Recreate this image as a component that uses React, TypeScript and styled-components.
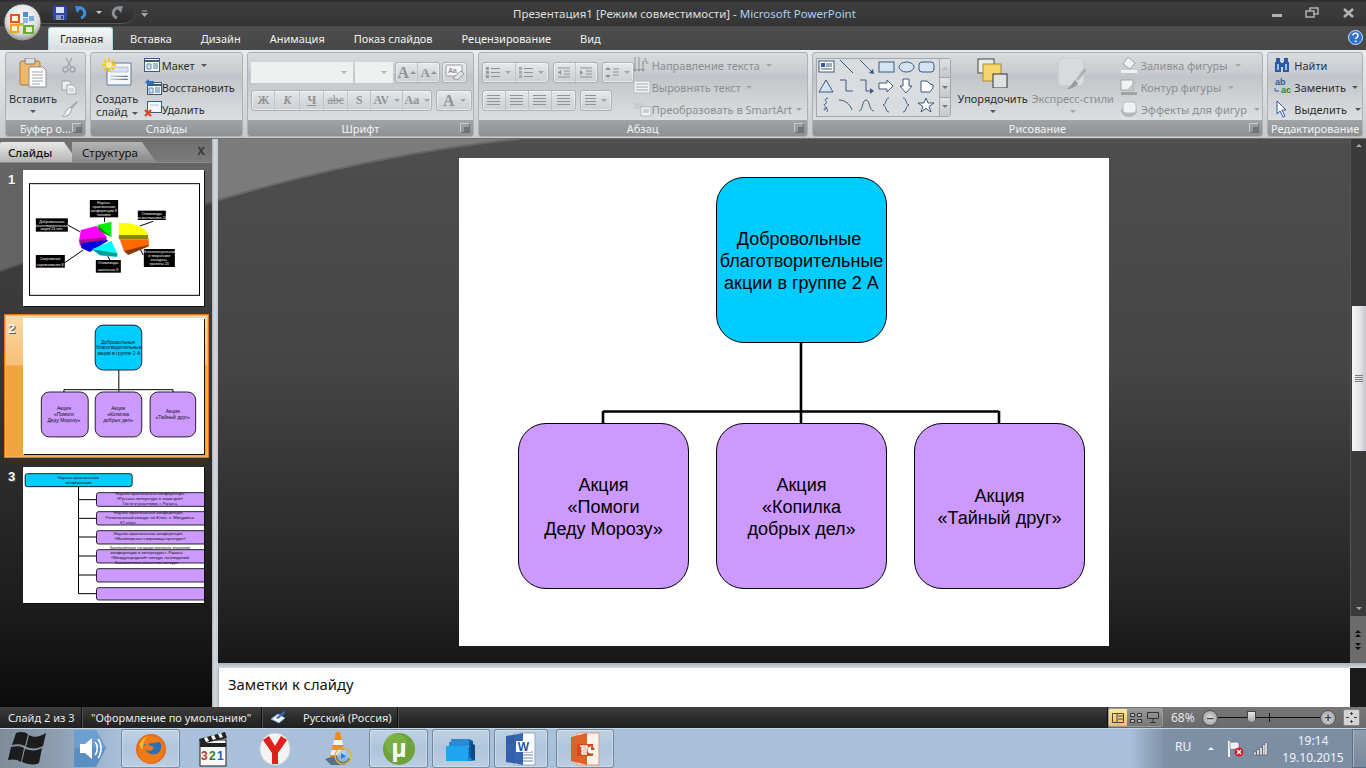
import React from "react";
import styled, { createGlobalStyle } from "styled-components";

const Global = createGlobalStyle`
  html, body { margin: 0; padding: 0; background: #2a2a2a; }
  * { box-sizing: border-box; }
  body { font-family: "Noto Sans", "Liberation Sans", sans-serif; font-size: 11px; overflow: hidden; }
`;

const Window = styled.div`width: 1366px; height: 768px; display: flex; flex-direction: column; overflow: hidden; position: relative;`;

/* ---------- title bar ---------- */
const TitleBar = styled.div`
  height: 26px; flex: none; display: flex; align-items: center; position: relative;
  background: linear-gradient(#2a2b33 0, #3c3c3c 3px, #3a3a3a 60%, #333 100%);
  padding-left: 40px;
`;
const Orb = styled.div`position: absolute; left: 3px; top: 3px; width: 39px; height: 39px; z-index: 5;`;
const Qat = styled.div`
  width: 94px; height: 21px; display: flex; align-items: center; padding-left: 13px; gap: 7px;
  background: linear-gradient(#3e3e3e, #2b2b2b); border-radius: 0 11px 11px 0; border-bottom: 1px solid #555;
`;
const QatCustom = styled.div`margin-left: 7px; display: flex;`;
const TitleText = styled.div`
  position: absolute; left: 513px; top: 5px; white-space: nowrap; color: #dedede; font-size: 11.5px; line-height: 18px;
`;
const TitleApp = styled.span`color: #a9d0f2;`;
const WinControls = styled.div`margin-left: auto; display: flex; align-items: center; height: 26px; gap: 21px; padding-right: 9px;`;

/* ---------- tab row ---------- */
const TabRow = styled.div`
  height: 24px; flex: none; display: flex; align-items: flex-end; padding-left: 48px; position: relative;
  background: linear-gradient(#4d4d4d, #474747);
  border-top: 1px solid #4a4a4a;
`;
const Tab = styled.div<{ $active?: boolean }>`
  height: 23px; line-height: 24px; white-space: nowrap; font-size: 11px;
  ${p => p.$active
    ? `padding: 0 11px; width: 65px; color: #1e1e1e; background: linear-gradient(#f4f7f8, #dfe4e6 70%, #d8dcdf); border-radius: 3px 3px 0 0; border: 1px solid #a9d6dc; border-bottom: none; margin-right: 17px; line-height: 22px;`
    : `color: #f1f1f1; margin-right: 29px;`}
`;
const HelpBtn = styled.div`position: absolute; right: 3px; top: 3px; display: flex;`;

/* ---------- ribbon ---------- */
const Ribbon = styled.div`
  height: 89px; flex: none; display: flex; gap: 3px; padding: 2px 2px 1px 5px;
  background: linear-gradient(#e9eaeb, #d9dbdd 50%, #c8cbce);
  border-bottom: 1px solid #6e6e6e;
`;
const Group = styled.div<{ $w: number }>`
  width: ${p => p.$w}px; display: flex; flex-direction: column; border: 1px solid #aeb1b4; border-radius: 3px; overflow: hidden;
  background: linear-gradient(#d9dcdf 0, #c9ccd0 22%, #c1c5c9 28%, #dde1e2 85%, #e2e5e5 100%);
  margin-right: 1px;
`;
const GroupBody = styled.div`flex: 1; display: flex; min-height: 0; position: relative;`;
const GroupLabel = styled.div`
  height: 16px; flex: none; position: relative; text-align: center; line-height: 17px; font-size: 11px; color: #f2f2f2; white-space: nowrap;
  background: linear-gradient(#a0a4a7, #8d9194);
`;
const Launcher = styled.div`position: absolute; right: 3px; top: 3px; width: 10px; height: 10px; border: 1px solid #c9cccf; border-right-color: #6e7174; border-bottom-color: #6e7174; &::after { content: ""; position: absolute; right: 0; bottom: 0; width: 5px; height: 5px; background: #70757a; }`;
const BigBtn = styled.div<{ $w: number; $ml?: number; $dim?: boolean }>`
  width: ${p => p.$w}px; margin-left: ${p => p.$ml ?? 0}px; display: flex; flex-direction: column; align-items: center;
  padding-top: 5px; line-height: 13px; font-size: 11px; color: ${p => p.$dim ? "#8c8f91" : "#2f2f2f"}; text-align: center; white-space: nowrap;
`;
const BigIcon = styled.div`height: 34px; display: flex; align-items: flex-start; justify-content: center;`;
const Arrow = styled.span<{ $dim?: boolean }>`
  display: inline-block; width: 0; height: 0; border: 3px solid transparent; border-top: 3px solid ${p => p.$dim ? "#a3a6a8" : "#555"}; border-bottom: none; vertical-align: middle; margin-left: 4px;
`;
const BigArrow = styled(Arrow)`display: block; margin: 5px 0 0;`;
const SmallCol = styled.div<{ $ml?: number; $w?: number }>`
  display: flex; flex-direction: column; margin-left: ${p => p.$ml ?? 0}px; padding-top: 1px; ${p => p.$w ? `width:${p.$w}px;` : ""}
`;
const SmallRow = styled.div<{ $dim?: boolean; $gap?: number }>`
  height: 22px; display: flex; align-items: center; gap: ${p => p.$gap ?? 3}px; white-space: nowrap; font-size: 11px;
  color: ${p => p.$dim ? "#8c8f91" : "#2f2f2f"};
`;
const Controls = styled.div<{ $pl: number }>`display: flex; flex-direction: column; padding: 9px 0 0 ${p => p.$pl}px; gap: 7px;`;
const CtlRow = styled.div<{ $gap?: number }>`display: flex; gap: ${p => p.$gap ?? 4}px; height: 21px;`;
const Combo = styled.div<{ $w: number }>`
  width: ${p => p.$w}px; height: 21px; background: #eef0f0; display: flex; align-items: center; justify-content: flex-end; padding-right: 6px;
`;
const BtnGroup = styled.div`
  display: flex; height: 21px; border: 1px solid #aeb2b5; border-radius: 3px; background: linear-gradient(#e6e8ea, #d7dadc 50%, #cdd0d3);
  box-shadow: inset 0 0 0 1px rgba(255,255,255,.45);
`;
const Btn = styled.div<{ $w: number; $size?: number; $i?: boolean; $u?: boolean; $s?: boolean }>`
  width: ${p => p.$w}px; display: flex; align-items: center; justify-content: center; gap: 1px; color: #8f9396; white-space: nowrap;
  border-right: 1px solid #c1c4c7; font: ${p => p.$i ? "italic " : ""}bold ${p => p.$size ?? 12}px "Liberation Serif", serif;
  ${p => p.$u ? "text-decoration: underline;" : ""} ${p => p.$s ? "text-decoration: line-through; font-weight: 400;" : ""}
  &:last-child { border-right: none; }
`;
const Gallery = styled.div`
  margin: 5px 0 0 3px; width: 123px; height: 59px; display: grid; grid-template-columns: repeat(6, 20px); grid-template-rows: repeat(3, 19px);
  justify-content: center; align-content: center; background: #d9dde0; border: 1px solid #a5a8ab; border-right: none;
`;
const GalleryScroll = styled.div`
  margin-top: 5px; width: 12px; height: 59px; display: flex; flex-direction: column; border: 1px solid #a5a8ab; border-radius: 0 3px 3px 0; overflow: hidden;
`;
const GalleryBtn = styled.div`
  flex: 1; display: flex; align-items: center; justify-content: center; border-bottom: 1px solid #a5a8ab;
  background: linear-gradient(#dfe1e3, #c6c9cc); &:last-child { border-bottom: 0; }
`;
const Tri = styled.span<{ $up?: boolean; $c?: string }>`
  display: block; flex: none; width: 0; height: 0; border: 3px solid transparent;
  ${p => p.$up ? `border-bottom: 3px solid ${p.$c ?? "#aaa"}; border-top: none;` : `border-top: 3px solid ${p.$c ?? "#777"}; border-bottom: none;`}
`;

/* ---------- workspace ---------- */
const Workspace = styled.div`flex: 1; min-height: 0; display: flex; position: relative; background: linear-gradient(#4e4e4e 0, #454545 40%, #252525 80%, #0f0f0f 100%);`;
const Swoosh = styled.svg`position: absolute; left: 0; top: 0; pointer-events: none;`;
const SidePanel = styled.div`width: 212px; flex: none; display: flex; flex-direction: column; position: relative; background: rgba(0,0,0,.18);`;
const PanelTabs = styled.div`height: 24px; flex: none; display: flex; padding-top: 3px; position: relative; background: linear-gradient(#6e6e6e, #7b7b7b); border-bottom: 1px solid #8a8a8a;`;
const PanelTab = styled.div<{ $active?: boolean }>`
  height: 20px; line-height: 21px; font-size: 11.5px; white-space: nowrap;
  clip-path: polygon(0 0, calc(100% - 14px) 0, 100% 100%, 0 100%);
  ${p => p.$active
    ? `width: 78px; padding-left: 8px; color: #111; font-weight: 500; background: linear-gradient(#e8e8e8, #b5b5b5); border-radius: 2px 0 0 0;`
    : `width: 84px; margin-left: -6px; padding-left: 10px; color: #111; background: linear-gradient(#b4b4b4, #8a8a8a);`}
`;
const PanelClose = styled.div`position: absolute; right: 7px; top: 3px; color: #3a3a3a; font: bold 14px "Liberation Sans", sans-serif;`;
const ThumbList = styled.div`display: flex; flex-direction: column; gap: 5px; padding-top: 2px;`;
const ThumbRow = styled.div<{ $sel?: boolean }>`
  margin-left: 4px; width: 205px; height: 144px; display: flex; padding: 4px 0 0 18px; position: relative;
  border: 1px solid transparent; &:nth-child(3) { margin-top: -1px; }
  ${p => p.$sel ? `border-color: #e0761c; box-shadow: inset 0 0 0 1px #f6b35c; padding-top: 3px; background: linear-gradient(#fbd9a5 0, #f7c078 35%, #f0a53f 36%, #f0a53f 100%);` : ""}
`;
const ThumbNum = styled.div`
  position: absolute; left: 3px; top: 6px; color: #f8f8f8; font: bold 13px "Liberation Sans", sans-serif; text-shadow: 1px 1px 0 #555;
`;
const ThumbBox = styled.div`width: 181px; height: 136px; background: #fff; box-shadow: 1px 1px 0 #111; flex: none;`;
const Splitter = styled.div`width: 6px; flex: none; background: linear-gradient(90deg, #aeb2b8, #d3d7de 40%, #c4c8cf); position: relative;`;
const RightCol = styled.div`flex: 1; min-width: 0; display: flex; flex-direction: column; position: relative;`;
const EditRow = styled.div`flex: 1; min-height: 0; display: flex;`;
const SlideArea = styled.div`flex: 1; min-width: 0; display: flex; justify-content: center; padding-top: 19px;`;
const Slide = styled.div`width: 650px; height: 488px; background: #fff; position: relative; font-family: "Liberation Sans", sans-serif; flex: none;`;
const Connectors = styled.svg`position: absolute; left: 0; top: 0;`;
const Node = styled.div<{ $x: number; $y: number; $c: string }>`
  position: absolute; left: ${p => p.$x}px; top: ${p => p.$y}px; width: 171px; height: 166px; border-radius: 28px; border: 1.5px solid #000;
  background: ${p => p.$c}; display: flex; align-items: center; justify-content: center; text-align: center; padding-top: 1px;
  font-size: 18px; line-height: 22px; color: #000; white-space: pre;
`;
const ScrollBar = styled.div`width: 16px; flex: none; display: flex; flex-direction: column; align-items: center; background: #3a3a3a; border-left: 1px solid #555; padding-top: 5px;`;
const ScrollTrack = styled.div`flex: 1; width: 100%; display: flex; flex-direction: column; align-items: center; justify-content: flex-start;`;
const ScrollThumb = styled.div`
  width: 14px; height: 145px; margin-top: 159px; display: flex; flex-direction: column; gap: 1px; align-items: center; justify-content: center;
  background: linear-gradient(90deg, #f6f6f6, #e9e9ec 50%, #c5c6cc);
  & > i { display: block; width: 8px; height: 1px; background: #7c7c80; }
`;
const ScrollEnd = styled.div`margin-top: auto; margin-bottom: 6px;`;
const PageBtns = styled.div`
  height: 47px; width: 16px; margin-left: -1px; flex: none; background: #6b6b6b; display: flex; flex-direction: column; align-items: center; justify-content: center; gap: 6px;
`;
const DoubleArrow = styled.div`display: flex; flex-direction: column; gap: 1px;`;
const HGrip = styled.div`height: 5px; flex: none; background: linear-gradient(#aeb2b8, #d3d7de);`;
const NotesRow = styled.div`height: 39px; flex: none; display: flex;`;
const Notes = styled.div`flex: 1; background: #fff; padding: 6px 0 0 9px; color: #111; font-size: 14.8px; line-height: 20px; border-left: 1px solid #aeb2b8;`;
const NotesEnd = styled.div`width: 16px; flex: none; background: #1b1b1b;`;

/* ---------- status bar ---------- */
const StatusBar = styled.div`
  height: 21px; flex: none; display: flex; align-items: center; color: #e9e9e9; font-size: 11px;
  background: linear-gradient(#3f3f3f, #2c2c2c 50%, #202020); position: relative;
`;
const StatusCell = styled.div<{ $w: number; $pl: number }>`
  width: ${p => p.$w}px; padding-left: ${p => p.$pl}px; height: 21px; line-height: 21px; white-space: nowrap; border-right: 1px solid #111; box-shadow: 1px 0 0 #4c4c4c; display: flex; align-items: center;
`;
const LangText = styled.span`margin-left: 16px;`;
const StatusRight = styled.div`margin-left: auto; display: flex; align-items: center; height: 21px; background: linear-gradient(#777, #6a6a6a); padding: 0 5px 0 0; border-left: 1px solid #111; width: 259px;`;
const ViewBtns = styled.div`display: flex; height: 19px; width: 55px; border: 1px solid #999; border-radius: 2px; overflow: hidden;`;
const ViewBtn = styled.div<{ $on?: boolean }>`flex: 1; display: flex; align-items: center; justify-content: center; background: ${p => p.$on ? "linear-gradient(#ffe7a6,#f8bb55)" : "linear-gradient(#9a9a9a,#777)"};`;
const Zoom = styled.div`width: 31px; margin-left: 8px; color: #e4e6e8; font-size: 12px;`;
const Round = styled.div`width: 16px; height: 16px; border-radius: 50%; background: radial-gradient(#e2e2e2, #8e8e8e); border: 1px solid #555; display: flex; align-items: center; justify-content: center; flex: none; color: #444; font: bold 13px/1 "Liberation Sans", sans-serif;`;
const SliderLine = styled.div`width: 102px; height: 1px; background: #111; position: relative; flex: none;
  &::after { content: ""; position: absolute; left: 51px; top: -4px; width: 1px; height: 9px; background: #111; }`;
const SliderKnob = styled.div`position: absolute; left: 29px; top: -6px; width: 9px; height: 12px; background: linear-gradient(#e8e8e8,#a6a6a6); border: 1px solid #444; clip-path: polygon(0 0,100% 0,100% 65%,50% 100%,0 65%);`;
const FitBtn = styled.div`width: 17px; height: 17px; margin-left: 7px; background: #d4d4d4; border: 1px solid #888; border-radius: 2px; display: flex; align-items: center; justify-content: center; flex: none;`;

/* ---------- taskbar ---------- */
const Taskbar = styled.div`
  height: 40px; flex: none; display: flex; align-items: stretch; position: relative; border-top: 1px solid #c8d7e6;
  background: linear-gradient(90deg, #7d8b99 0, #8e9fb2 60px, #a8c0da 120px, #a8c0da 1130px, #7d90a6 1165px, #7b8da2 100%);
`;
const TaskSlot = styled.div<{ $w: number; $ml: number; $on?: boolean }>`
  width: ${p => p.$w}px; margin-left: ${p => p.$ml}px; flex: none; display: flex; align-items: center; justify-content: center;
  ${p => p.$on ? `border: 1px solid rgba(60,80,100,.55); border-radius: 3px; background: linear-gradient(rgba(255,255,255,.28), rgba(255,255,255,.08) 50%, rgba(255,255,255,.22)); box-shadow: inset 0 0 0 1px rgba(255,255,255,.3);` : ""}
`;
const Tray = styled.div`margin-left: auto; display: flex; align-items: center; color: #f1f4f7; position: relative; height: 100%; font-size: 12px;`;
const Lang = styled.div`width: 33px; margin-top: -4px;`;
const TrayGap = styled.div<{ $w: number }>`width: ${p => p.$w}px; flex: none;`;
const Clock = styled.div`width: 54px; margin-left: 18px; text-align: center; line-height: 17px; font-size: 12px; white-space: nowrap; display: flex; flex-direction: column; align-items: center;`;
const ShowDesk = styled.div`width: 14px; height: 100%; margin-left: 12px; background: linear-gradient(#8d9cad, #76889c); border: 1px solid #5d6d7e; border-right: none; box-shadow: inset 1px 0 0 #a9b7c6;`;

/* ---------- icons ---------- */
const S = ({ w, h = w, children }: { w: number; h?: number; children: React.ReactNode }) => (
  <svg width={w} height={h} viewBox={`0 0 ${w} ${h}`} style={{ display: "block", flex: "none" }}>{children}</svg>
);
const OrbIcon = () => (
  <svg width="39" height="39" viewBox="0 0 39 39">
    <defs>
      <radialGradient id="orb" cx=".5" cy=".35" r=".7"><stop offset="0" stopColor="#fff" /><stop offset=".65" stopColor="#d8dadb" /><stop offset="1" stopColor="#777" /></radialGradient>
    </defs>
    <circle cx="19.5" cy="19.5" r="18.5" fill="url(#orb)" stroke="#4a4a4a" />
    <path d="M7 11h10v9H7z" fill="#e8541e" /><path d="M9 13h6v5H9z" fill="#fff3e0" />
    <path d="M7 21h9v9H7z" fill="#f3a514" /><path d="M9 23h5v5H9z" fill="#fff3d0" />
    <path d="M20 9h5v5h-5z" fill="#4f8fd8" /><path d="M26 13h5v5h-5z" fill="#4f8fd8" opacity=".7" />
    <path d="M20 15h5v5h-5z" fill="#8bb7e6" />
    <path d="M20 22h11v9H20z" fill="#6aad2e" /><path d="M23 24h6v5h-6z" fill="#e6f5d0" />
    <path d="M16 20h5v3h-5z" fill="#b7c64a" />
  </svg>
);
const SaveIcon = () => (<S w={14}><rect width="14" height="14" rx="1" fill="#2c47a8" /><rect x="3" y="1" width="8" height="6" fill="#d8e4f5" /><rect x="3" y="9" width="8" height="5" fill="#8d9bb5" /><rect x="8" y="10" width="2" height="3" fill="#2c47a8" /></S>);
const UndoIcon = ({ c }: { c: string }) => (<S w={15}><path d="M4 3 A5 5 0 1 1 7 13" fill="none" stroke={c} strokeWidth="3" /><path d="M1 1 L8 2 L3 8Z" fill={c} /></S>);
const RedoIcon = () => (<S w={15}><path d="M11 3 A5 5 0 1 0 8 13" fill="none" stroke="#8b8f94" strokeWidth="3" /><path d="M14 1 L7 2 L12 8Z" fill="#8b8f94" /></S>);
const PasteIcon = () => (<S w={28} h={30}><rect x="1" y="3" width="20" height="24" rx="2" fill="#eeb868" stroke="#a87c3c" /><rect x="6" y="0" width="10" height="6" rx="1" fill="#dde0e3" stroke="#7b7f83" /><path d="M10 9h14l3 3v17H10z" fill="#fff" stroke="#8b8f94" /><path d="M13 14h11M13 17h11M13 20h11M13 23h11M13 26h8" stroke="#9ea2a6" /></S>);
const CutIcon = () => (<S w={16}><path d="M5 1l5 9M11 1L6 10" stroke="#a3a7ab" strokeWidth="1.5" /><circle cx="4.5" cy="12.5" r="2.5" fill="none" stroke="#a3a7ab" strokeWidth="1.5" /><circle cx="11.5" cy="12.5" r="2.5" fill="none" stroke="#a3a7ab" strokeWidth="1.5" /></S>);
const CopyIcon = () => (<S w={16}><path d="M1 2h7l2 2v7H1z" fill="#ececec" stroke="#a3a7ab" /><path d="M6 6h6l3 3v6H6z" fill="#f4f4f4" stroke="#a3a7ab" /><path d="M8 10h5M8 12h5" stroke="#b6b9bc" /></S>);
const BrushIcon = () => (<S w={18}><path d="M16 1l1 1-6 7-2-2z" fill="#a6a9ac" /><path d="M9 7l2 2-3 6c-2 1-5 2-7 1 2-1 3-3 4-5z" fill="#ededed" stroke="#a3a7ab" /></S>);
const NewSlideIcon = () => (<S w={30} h={28}><path d="M5 5h24v22H5z" fill="#f5f7f9" stroke="#5d7a9c" /><path d="M8 9h18v5H8z" fill="#d8e2ee" stroke="#b5c4d6" /><path d="M8 18h18v1M8 21h18v1" stroke="#b5c4d6" /><g stroke="#f6c822" strokeWidth="2"><path d="M7 0v14M0 7h14M2 2l10 10M12 2L2 12" /></g><circle cx="7" cy="7" r="3" fill="#fff3a8" /></S>);
const LayoutIcon = () => (<S w={16}><rect x=".5" y="1.5" width="15" height="13" fill="#f3f6f9" stroke="#3d5a80" /><path d="M1 4h14" stroke="#3d5a80" strokeWidth="2" /><path d="M3 7h4v5H3z" fill="#cfe0f2" stroke="#6d8db0" /><path d="M9 7h5M9 9h5M9 11h5" stroke="#5a7da3" /></S>);
const ResetIcon = () => (<S w={18}><rect x="3.5" y="4.5" width="14" height="12" fill="#f3f6f9" stroke="#3d5a80" /><path d="M4 7h13" stroke="#3d5a80" strokeWidth="2" /><path d="M5 10h4v5H5z" fill="#cfe0f2" stroke="#6d8db0" /><path d="M11 10h5M11 12h5M11 14h5" stroke="#5a7da3" /><path d="M1 4l4-3v2h5v3H5v2z" fill="#2f6fc4" /></S>);
const DeleteIcon = () => (<S w={18}><rect x="3.5" y="1.5" width="14" height="11" fill="#f3f6f9" stroke="#3d5a80" /><path d="M6 4h9v2H6z" fill="#cfe0f2" /><path d="M1 10l6 6M7 10l-6 6" stroke="#e0431c" strokeWidth="2.4" /></S>);
const ClearIcon = () => (<S w={20} h={18}><rect x="1" y="1" width="16" height="11" rx="1" fill="#f5f5f5" stroke="#9a9da0" /><text x="3" y="9" fontSize="7" fill="#8f9396" fontFamily="Liberation Sans">Aa</text><path d="M8 14l8-7 3 3-7 6z" fill="#e3e3e3" stroke="#9a9da0" /></S>);
const GrayLines = ({ w = 13, n = 4 }: { w?: number; n?: number }) => (<S w={w} h={n * 3}>{Array.from({ length: n }).map((_, i) => <rect key={i} y={i * 3} width={w} height="1" fill="#8f9396" />)}</S>);
const ListIcon = ({ num }: { num?: boolean }) => (<S w={14} h={12}>{[0, 4, 8].map(y => <g key={y}><rect y={y} width="3" height="3" fill={num ? "#a7aaad" : "#999c9f"} /><rect x="5" y={y + 1} width="9" height="1" fill="#8f9396" /></g>)}</S>);
const IndentIcon = ({ flip }: { flip?: boolean }) => (<S w={14} h={12}><path d="M1 1h12M7 4h6M7 7h6M1 10h12" stroke="#8f9396" /><path d={flip ? "M1 3v5l3-2.5z" : "M4 3v5L1 5.5z"} fill="#8f9396" /></S>);
const SpacingIcon = () => (<S w={14} h={13}><path d="M3 1l3 3H0zM3 12l3-3H0z" fill="#8f9396" /><path d="M8 3h6M8 6h6M8 9h6" stroke="#8f9396" /></S>);
const DirIcon = () => (<S w={17} h={18}><path d="M2 1v13M6 1v13M10 5v9" stroke="#8f9396" /><path d="M0 13l2 3 2-3zM4 13l2 3 2-3zM8 13l2 3 2-3z" fill="#8f9396" /><text x="9" y="8" fontSize="9" fill="#8f9396" fontFamily="Liberation Serif">A</text></S>);
const AlignTextIcon = () => (<S w={18} h={16}><rect x="1" y="2" width="16" height="12" fill="#f1f2f3" stroke="#b6b9bc" /><path d="M3 5h12M3 8h12M3 11h12" stroke="#a3a7ab" /></S>);
const SmartIcon = () => (<S w={19} h={16}><path d="M1 2h10l-2 6H1z" fill="#c9cccf" /><rect x="8" y="6" width="10" height="9" fill="#f1f2f3" stroke="#b6b9bc" /><path d="M10 9h6M10 11h6" stroke="#a3a7ab" /></S>);
const ArrangeIcon = () => (<S w={31} h={30}><rect x="1" y="1" width="16" height="14" fill="#e8eaec" stroke="#444" /><rect x="6" y="6" width="18" height="17" fill="#f4d66a" stroke="#b08c2a" /><rect x="16" y="16" width="14" height="14" fill="#dfe1e3" stroke="#333" /></S>);
const QuickStyle = () => (<S w={32} h={33}><rect x="1" y="0" width="26" height="28" rx="5" fill="#d9dadc" stroke="#c6c7ca" /><path d="M27 10l3 2-9 11-2-2z" fill="#b0b2b4" /><path d="M18 22l3 3c-2 4-7 6-11 6 3-2 5-5 8-9z" fill="#999b9e" /></S>);
const FillIcon = () => (<S w={18} h={18}><path d="M8 1l7 6-5 6-7-5z" fill="#f1f1f1" stroke="#9fa3a7" /><rect x="1" y="14" width="16" height="3" fill="#f0f0f0" /></S>);
const OutlineIcon = () => (<S w={18} h={18}><rect x="1" y="2" width="12" height="10" fill="#f3f3f3" stroke="#9fa3a7" /><path d="M8 11l7-8 2 1-7 8z" fill="#bcbfc2" /><rect x="1" y="14" width="16" height="3" fill="#9fa3a7" /></S>);
const EffectIcon = () => (<S w={18} h={18}><ellipse cx="9" cy="11" rx="8" ry="6" fill="#b3b6b9" /><rect x="3" y="2" width="13" height="11" rx="3" fill="#f0f1f2" stroke="#bcbfc2" /></S>);
const FindIcon = () => (<S w={16}><g fill="#2d5aa5"><rect x="2" y="1" width="4" height="4" /><rect x="10" y="1" width="4" height="4" /><rect x="1" y="5" width="6" height="10" /><rect x="9" y="5" width="6" height="10" /><rect x="6" y="6" width="4" height="4" /></g><path d="M3 7h2v6H3zM11 7h2v6h-2z" fill="#9bc0ee" /></S>);
const ReplaceIcon = () => (<S w={18}><text x="1" y="7" fontSize="9" fill="#2d5aa5" fontFamily="Liberation Sans" fontWeight="700">ab</text><text x="7" y="15" fontSize="9" fill="#2a8a2a" fontFamily="Liberation Sans" fontWeight="700">ac</text><path d="M1 10v3h4" stroke="#2d5aa5" fill="none" /></S>);
const SelectIcon = () => (<S w={16} h={18}><path d="M3 1v13l3-3 3 6 2-1-3-6h4z" fill="#fff" stroke="#2d5aa5" /></S>);
const HelpIcon = () => (<S w={15}><circle cx="7.5" cy="7.5" r="7" fill="#2f6fd0" stroke="#cfe3fa" /><path d="M5 5.5c0-3 5-3 5 0 0 2-2.4 2-2.4 3.6" fill="none" stroke="#fff" strokeWidth="1.6" /><rect x="6.8" y="10.5" width="1.7" height="1.7" fill="#fff" /></S>);

const shapes: React.ReactNode[] = [
  <g key="a"><rect x="1" y="2" width="15" height="11" fill="#fff" stroke="#3d5a80" /><rect x="3" y="4" width="4" height="4" fill="#2d5aa5" /><path d="M8 5h6M8 7h6M3 10h11" stroke="#3d5a80" /></g>,
  <path key="b" d="M2 1l13 13" stroke="#3d5a80" fill="none" />,
  <g key="c"><path d="M2 1l12 12" stroke="#3d5a80" /><path d="M16 15l-5-1 4-4z" fill="#3d5a80" /></g>,
  <rect key="d" x="1" y="3" width="15" height="10" fill="#d5e4f5" stroke="#3d5a80" />,
  <ellipse key="e" cx="8.5" cy="8" rx="7.5" ry="5" fill="#d5e4f5" stroke="#3d5a80" />,
  <rect key="f" x="1" y="3" width="15" height="10" rx="3" fill="#d5e4f5" stroke="#3d5a80" />,
  <path key="g" d="M8 2l7 12H1z" fill="#d5e4f5" stroke="#3d5a80" />,
  <path key="h" d="M2 2h6v11h7" fill="none" stroke="#3d5a80" />,
  <g key="i"><path d="M2 2h6v11h5" fill="none" stroke="#3d5a80" /><path d="M16 13l-4-3v6z" fill="#3d5a80" /></g>,
  <path key="j" d="M1 5h8V2l6 6-6 6v-3H1z" fill="#fff" stroke="#3d5a80" />,
  <path key="k" d="M5 1h6v7h3l-6 7-6-7h3z" fill="#fff" stroke="#3d5a80" />,
  <path key="l" d="M3 3h6l3 3 3 1v3l-3 4H3z" fill="#fff" stroke="#3d5a80" />,
  <path key="m" d="M10 1c-7 2 2 4-3 6-3 2 4 3 1 5-2 2-3 0-1-1s3 2 2 4" fill="none" stroke="#3d5a80" />,
  <path key="n" d="M1 3c6 0 11 4 13 10" fill="none" stroke="#3d5a80" />,
  <path key="o" d="M1 14c4 0 3-11 7-11s3 11 8 11" fill="none" stroke="#3d5a80" />,
  <path key="p" d="M11 1c-4 0-2 6-6 7 4 1 2 7 6 7" fill="none" stroke="#3d5a80" />,
  <path key="q" d="M5 1c4 0 2 6 6 7-4 1-2 7-6 7" fill="none" stroke="#3d5a80" />,
  <path key="r" d="M8 1l2 5h6l-5 3.5 2 5.5-5-3.5L3 15l2-5.500L0 6h6z" fill="#fff" stroke="#3d5a80" />,
];

const Thumb1 = () => (
  <svg width="181" height="136" viewBox="70 90 542 408">
    <rect x="89" y="131" width="510" height="335" fill="#fff" stroke="#000" strokeWidth="3" />
    <g stroke="#000" strokeWidth="3" fill="none"><path d="M204 255l36 20M314 232v14M420 258l40-14M195 368l55-38M322 345l8 15M430 345l-10-20" /></g>
    <path d="M238 300l5-30 47-12 32 34-82 26z" fill="#ff00ff" /><path d="M238 300l82-8v8l-77 18z" fill="#a01090" />
    <path d="M244 310l77-10 4 2-55 34-26-12z" fill="#0000e0" />
    <path d="M277 328l58-25 17 37v10l-50-3z" fill="#00ffff" /><path d="M277 328l75 12v10l-52-5z" fill="#099" />
    <path d="M293 255l42-10v46l-35-17z" fill="#00ee00" /><path d="M293 255l40 36-33-17z" fill="#0a8a0a" />
    <path d="M357 248c50 0 80 14 88 38H357z" fill="#ffff00" /><rect x="357" y="285" width="88" height="13" fill="#8a8a00" />
    <path d="M360 298h87v16l-65 22-10-3z" fill="#ff6a00" /><path d="M372 333l75-19v5l-62 26z" fill="#8a3a00" />
    <g fill="#000"><rect x="270" y="180" width="85" height="52" /><rect x="414" y="212" width="84" height="28" /><rect x="108" y="235" width="96" height="40" /><rect x="108" y="345" width="87" height="38" /><rect x="288" y="360" width="75" height="38" /><rect x="432" y="327" width="93" height="54" /></g>
    <g fill="#f4f4f4" fontFamily="Liberation Sans" fontSize="11" textAnchor="middle">
      <text x="312" y="192">Научно-</text><text x="312" y="204">практические</text><text x="312" y="216">конференции 8</text><text x="312" y="228">человек</text>
      <text x="456" y="224">Олимпиады</text><text x="456" y="236">по математике 24</text>
      <text x="156" y="250">Добровольные</text><text x="156" y="260">благотворительные</text><text x="156" y="271">акции 24 чел.</text>
      <text x="151" y="360">Спортивные</text><text x="151" y="377">соревнования 8</text>
      <text x="325" y="373">Олимпиады</text><text x="325" y="393">школьные 8</text>
      <text x="478" y="340">Интеллектуальные</text><text x="478" y="351">и творческие</text><text x="478" y="363">конкурсы,</text><text x="478" y="376">проекты 24</text>
    </g>
  </svg>
);
const Thumb2 = () => (
  <svg width="181" height="136" viewBox="70 25 544 408">
    <g stroke="#000" strokeWidth="3" fill="none"><path d="M358 180v66M193 240h328M193 240v8M521 240v8" /></g>
    <g fill="#cc99ff" stroke="#000" strokeWidth="2.5"><rect x="125" y="247" width="141" height="135" rx="24" /><rect x="287" y="247" width="140" height="135" rx="24" /><rect x="452" y="247" width="137" height="135" rx="24" /></g>
    <rect x="287" y="46" width="140" height="135" rx="24" fill="#00ccff" stroke="#000" strokeWidth="2.5" />
    <g fontFamily="Liberation Sans" fontSize="15" textAnchor="middle" fill="#111">
      <text x="356" y="102">Добровольные</text><text x="358" y="119">благотворительные</text><text x="358" y="137">акции в группе 2 А</text>
      <text x="193" y="300">Акция</text><text x="193" y="319">«Помоги</text><text x="193" y="338">Деду Морозу»</text>
      <text x="356" y="300">Акция</text><text x="356" y="319">«Копилка</text><text x="356" y="338">добрых дел»</text>
      <text x="520" y="310">Акция</text><text x="520" y="329">«Тайный друг»</text>
    </g>
  </svg>
);
const Thumb3 = () => (
  <svg width="181" height="135" viewBox="70 20 542 405">
    <g stroke="#000" strokeWidth="3" fill="none"><path d="M236 80v320M236 118h54M236 174h54M236 230h54M236 287h54M236 344h54M236 400h54" /></g>
    <rect x="76" y="40" width="321" height="39" rx="7" fill="#00ccff" stroke="#000" strokeWidth="2.5" />
    <g fill="#cc99ff" stroke="#000" strokeWidth="2.5">
      <rect x="290" y="97" width="330" height="41" rx="6" /><rect x="290" y="154" width="330" height="40" rx="6" /><rect x="290" y="211" width="330" height="40" rx="6" /><rect x="290" y="268" width="330" height="40" rx="6" /><rect x="290" y="325" width="330" height="40" rx="6" /><rect x="290" y="382" width="330" height="37" rx="6" />
    </g>
    <g fontFamily="Liberation Sans" fontSize="12.5" textAnchor="middle" fill="#111">
      <text x="236" y="57">Научно-практические</text><text x="236" y="72">конференции</text>
      <text x="450" y="105">Научно-практическая конференция</text><text x="450" y="119">«Русская литература в наши дни»</text><text x="450" y="134">Гости и участники, г. Ржакса</text>
      <text x="445" y="162">Научно-практическая конференция</text><text x="450" y="177">Региональный конкурс по Югов. п. Мичуринск</text><text x="385" y="191">67 класс</text>
      <text x="445" y="224">Научно-практическая конференция</text><text x="450" y="239">«Малинорская сокровища культуры»</text>
      <text x="450" y="267">Заключённые государственного значения</text><text x="440" y="282">конференции и литературы г. Ржакса</text><text x="450" y="296">«Международный» конкурс наблюдений</text><text x="440" y="311">Заключенных областная конкурс</text>
    </g>
  </svg>
);

const FirefoxIcon = () => (<S w={32}><circle cx="16" cy="16" r="15" fill="#e8691a" /><circle cx="17" cy="13" r="10" fill="#2b6fb3" /><path d="M4 12c2-6 8-10 14-9 6 1 10 5 11 11 1 7-5 16-14 16S1 21 4 12c2 2 2 4 4 4 0-3 3-5 6-7-1 3 1 4 3 4 2 1 2 3 0 4-3 2-6 0-7-1 2 5 9 7 13 4 4-3 4-8 2-11" fill="#ee7a1a" /><path d="M4 12C6 7 9 4 13 3 8 7 9 9 8 16 6 16 6 14 4 12z" fill="#f6b823" /></S>);
const ClapIcon = () => (<S w={30} h={36}><rect x="2" y="9" width="26" height="26" fill="#f8f8f8" stroke="#222" /><path d="M1 8L27 1l2 6-26 6z" fill="#222" /><path d="M6 7l3-1 2 4-3 1zM13 5l3-1 2 4-3 1zM20 3l3-1 2 4-3 1z" fill="#fff" /><rect x="2" y="12" width="26" height="4" fill="#222" /><text x="3" y="29" fontSize="12" fontWeight="700" fontFamily="Liberation Sans" fill="#c0392b">3</text><text x="11" y="29" fontSize="12" fontWeight="700" fontFamily="Liberation Sans" fill="#2d7d32">2</text><text x="19" y="29" fontSize="12" fontWeight="700" fontFamily="Liberation Sans" fill="#1f5fb5">1</text></S>);
const YandexIcon = () => (<S w={32} h={34}><ellipse cx="16" cy="17" rx="15" ry="16" fill="#f4f4f4" stroke="#d5d5d5" /><path d="M4 8L10 4 16 14 22 4l6 4-9 13v11h-6V21z" fill="#e0201c" /></S>);
const VlcIcon = () => (<S w={30} h={36}><path d="M13 1h4l6 25H7z" fill="#f08a1a" /><path d="M11 9h8l1 5h-10zM8.500 19h13l1 5H7.500z" fill="#f4f4f4" /><path d="M2 28l10-3h8l8 3-6 6H8z" fill="#5b6f86" /><circle cx="20" cy="25" r="8" fill="none" stroke="#e8b23a" strokeWidth="1.5" /><circle cx="20" cy="25" r="6" fill="#9ec7e8" opacity=".8" /><path d="M18 22l5 3-5 3z" fill="#2c7fc8" /></S>);
const SpeakerIcon = () => (<S w={32} h={37}><path d="M0 0h22l10 18-10 19H0z" fill="#5a8fc4" /><path d="M0 0h22l10 18H0z" fill="#79a8d8" opacity=".6" /><path d="M6 14h5l7-6v21l-7-6H6z" fill="#fff" /><path d="M21 12c3 3 3 10 0 13M24 9c4 5 4 14 0 19" stroke="#fff" strokeWidth="1.6" fill="none" /></S>);
const StartIcon = () => (<S w={40} h={38}><g fill="#1c1c1c"><path d="M9 3C14 1 18 2 21 4L18 16C14 14 9 14 5 15Z" /><path d="M22 5C27 8 33 7 39 3L36 16C31 19 25 19 19 17Z" /><path d="M4 17C9 16 14 16 17 18L14 32C10 29 5 29 1 30Z" /><path d="M18 19C24 21 30 21 35 18L32 33C26 36 20 34 15 32Z" /></g></S>);
const TorrentIcon = () => (<S w={34}><circle cx="17" cy="17" r="16" fill="#6ea23a" /><circle cx="14" cy="12" r="11" fill="#86b94b" opacity=".55" /><text x="17" y="25" textAnchor="middle" fontSize="26" fontWeight="700" fontFamily="Liberation Sans" fill="#fff">µ</text></S>);
const FolderIcon = () => (<S w={30} h={28}><path d="M5 4h18v4H5zM3 7h20v4H3z" fill="#2b8ad4" /><path d="M0 11h21l3 2 3-2v15H3z" fill="#1586d6" /><path d="M23 4l4 2v18l-4-2z" fill="#0d5ea0" /><path d="M25 8l4 2v16l-4-2z" fill="#0a4a86" /><rect y="11" width="22" height="15" fill="#1ea5ef" /></S>);
const WordIcon = () => (<S w={32} h={34}><path d="M9 1h21v32H9z" fill="#fff" stroke="#99a7bd" /><path d="M17 20h11M17 23h11M17 26h11M12 29h16" stroke="#6f88ad" /><path d="M1 4l17-3v32L1 30z" fill="#2857a8" opacity=".92" /><rect x="11" y="9" width="15" height="11" fill="#fff" /><text x="18.500" y="19" textAnchor="middle" fontSize="12" fontWeight="700" fontFamily="Liberation Sans" fill="#2857a8">W</text></S>);
const PptIcon = () => (<S w={32} h={34}><path d="M8 1h22v32H8z" fill="#fdf2ea" stroke="#e59a76" /><path d="M2 5l16-4v32L2 29z" fill="#e2602a" /><rect x="8" y="12" width="16" height="12" fill="#d8491a" /><path d="M11 14h7v2h-5v2h4v2h-4v2h5" fill="none" stroke="#fff" strokeWidth="1.4" /><circle cx="22" cy="18" r="3.500" fill="#fff" /><path d="M22 18v-3.500a3.500 3.500 0 0 1 3.500 3.500z" fill="#d8491a" /></S>);
const NetIcon = () => (<S w={16} h={14}>{[2, 5, 8, 11, 13].map((x, i) => <rect key={x} x={x} y={10 - i * 2.4} width="2" height={3 + i * 2.4} fill="#fff" stroke="#333" strokeWidth=".4" />)}</S>);
const FlagIcon = () => (<S w={17} h={16}><path d="M2 0v16" stroke="#fff" strokeWidth="1.8" /><path d="M3 1c3 1 6-1 9 1v7c-3-2-6 0-9-1z" fill="#f4f4f4" stroke="#555" strokeWidth=".5" /><circle cx="12" cy="11" r="4.500" fill="#d81e2a" /><path d="M10 9l4 4M14 9l-4 4" stroke="#fff" strokeWidth="1.3" /></S>);
const SpellIcon = () => (<S w={17} h={15}><path d="M1 9l7-5 7 4-6 5z" fill="#f4f6f8" stroke="#7aa2d0" /><path d="M6 8l8-7 1 2-7 6z" fill="#2f6fd0" /></S>);
const WinBtns = () => (
  <WinControls>
    <S w={12} h={10}><rect x="1" y="6" width="10" height="3" fill="#b3b3b3" /></S>
    <S w={16} h={12}><rect x="6" y="1" width="8" height="6" fill="none" stroke="#b8b8b8" strokeWidth="1.4" /><rect x="2" y="4" width="8" height="6" fill="#3a3a3a" stroke="#b8b8b8" strokeWidth="1.4" /></S>
    <S w={16} h={12}><path d="M3 2l9 8M12 2l-9 8" stroke="#b3b3b3" strokeWidth="2.6" /></S>
  </WinControls>
);

const SMALL_TEXT_ICON: [React.ReactNode, string, boolean, number][] = [
  [<LayoutIcon key="1" />, "Макет", true, 2],
  [<ResetIcon key="2" />, "Восстановить", false, 0],
  [<DeleteIcon key="3" />, "Удалить", false, 0],
];

export default function App() {
  return (
    <Window>
      <Global />
      <TitleBar>
        <Orb><OrbIcon /></Orb>
        <Qat>
          <SaveIcon />
          <UndoIcon c="#3f8ce0" />
          <Tri $c="#ccc" />
          <RedoIcon />
        </Qat>
        <QatCustom><S w={7} h={7}><path d="M1 1h5" stroke="#aaa" /><path d="M0 3h7L3.500 7z" fill="#aaa" /></S></QatCustom>
        <TitleText>Презентация1 [Режим совместимости] - <TitleApp>Microsoft PowerPoint</TitleApp></TitleText>
        <WinBtns />
      </TitleBar>

      <TabRow>
        <Tab $active>Главная</Tab>
        {["Вставка", "Дизайн", "Анимация", "Показ слайдов", "Рецензирование", "Вид"].map(t => <Tab key={t}>{t}</Tab>)}
        <HelpBtn><HelpIcon /></HelpBtn>
      </TabRow>

      <Ribbon>
        <Group $w={81}>
          <GroupBody>
            <BigBtn $w={50} $ml={2}>
              <BigIcon><PasteIcon /></BigIcon>
              Вставить
              <BigArrow />
            </BigBtn>
            <SmallCol $ml={3}>
              <SmallRow><CutIcon /></SmallRow>
              <SmallRow><CopyIcon /></SmallRow>
              <SmallRow><BrushIcon /></SmallRow>
            </SmallCol>
          </GroupBody>
          <GroupLabel>Буфер о...<Launcher /></GroupLabel>
        </Group>
        <Group $w={154}>
          <GroupBody>
            <BigBtn $w={50} $ml={1}>
              <BigIcon><NewSlideIcon /></BigIcon>
              Создать<span>слайд<Arrow /></span>
            </BigBtn>
            <SmallCol $ml={2}>
              {SMALL_TEXT_ICON.map(([ic, t, a, g]) => (
                <SmallRow key={t} $gap={g}>{ic}{t}{a && <Arrow />}</SmallRow>
              ))}
            </SmallCol>
          </GroupBody>
          <GroupLabel>Слайды</GroupLabel>
        </Group>
        <Group $w={227}>
          <GroupBody>
            <Controls $pl={3}>
              <CtlRow $gap={2}>
                <Combo $w={102}><Tri $c="#b5b8bb" /></Combo>
                <Combo $w={38}><Tri $c="#b5b8bb" /></Combo>
                <BtnGroup>
                  <Btn $w={22} $size={16}>A<Tri $up $c="#8f9396" /></Btn>
                  <Btn $w={21} $size={13}>A<Tri $up $c="#8f9396" /></Btn>
                </BtnGroup>
                <BtnGroup><Btn $w={23}><ClearIcon /></Btn></BtnGroup>
              </CtlRow>
              <CtlRow $gap={4}>
                <BtnGroup>
                  <Btn $w={23}>Ж</Btn>
                  <Btn $w={25} $i>К</Btn>
                  <Btn $w={24} $u>Ч</Btn>
                  <Btn $w={24} $s>abc</Btn>
                  <Btn $w={23}>S</Btn>
                  <Btn $w={32}>AV<Arrow $dim /></Btn>
                  <Btn $w={28}>Aa<Arrow $dim /></Btn>
                </BtnGroup>
                <BtnGroup><Btn $w={34} $size={16}>A<Arrow $dim /></Btn></BtnGroup>
              </CtlRow>
            </Controls>
          </GroupBody>
          <GroupLabel>Шрифт<Launcher /></GroupLabel>
        </Group>
        <Group $w={331}>
          <GroupBody>
            <Controls $pl={3}>
              <CtlRow>
                <BtnGroup>
                  <Btn $w={33}><ListIcon /><Arrow $dim /></Btn>
                  <Btn $w={32}><ListIcon num /><Arrow $dim /></Btn>
                </BtnGroup>
                <BtnGroup>
                  <Btn $w={22}><IndentIcon /></Btn>
                  <Btn $w={21}><IndentIcon flip /></Btn>
                </BtnGroup>
                <BtnGroup><Btn $w={30}><SpacingIcon /><Arrow $dim /></Btn></BtnGroup>
              </CtlRow>
              <CtlRow>
                <BtnGroup>
                  {[0, 1, 2, 3].map(i => <Btn key={i} $w={23}><GrayLines /></Btn>)}
                </BtnGroup>
                <BtnGroup><Btn $w={30}><GrayLines w={11} /><Arrow $dim /></Btn></BtnGroup>
              </CtlRow>
            </Controls>
            <SmallCol $ml={-1}>
              <SmallRow $dim $gap={2}><DirIcon /><span>Направление текста</span><Arrow $dim /></SmallRow>
              <SmallRow $dim $gap={1}><AlignTextIcon /><span>Выровнять текст</span><Arrow $dim /></SmallRow>
              <SmallRow $dim $gap={0}><SmartIcon /><span>Преобразовать в SmartArt</span><Arrow $dim /></SmallRow>
            </SmallCol>
          </GroupBody>
          <GroupLabel>Абзац<Launcher /></GroupLabel>
        </Group>
        <Group $w={453}>
          <GroupBody>
            <Gallery>
              {shapes.map((s, i) => <S key={i} w={17} h={16}>{s}</S>)}
            </Gallery>
            <GalleryScroll>
              <GalleryBtn><Tri $up $c="#b8b8b8" /></GalleryBtn>
              <GalleryBtn><Tri $c="#777" /></GalleryBtn>
              <GalleryBtn><Tri $c="#777" /></GalleryBtn>
            </GalleryScroll>
            <BigBtn $w={72} $ml={6}>
              <BigIcon><ArrangeIcon /></BigIcon>
              Упорядочить
              <BigArrow />
            </BigBtn>
            <BigBtn $w={82} $ml={3} $dim>
              <BigIcon><QuickStyle /></BigIcon>
              Экспресс-стили
              <BigArrow $dim />
            </BigBtn>
            <SmallCol $ml={6}>
              <SmallRow $dim><FillIcon /><span>Заливка фигуры</span><Arrow $dim /></SmallRow>
              <SmallRow $dim><OutlineIcon /><span>Контур фигуры</span><Arrow $dim /></SmallRow>
              <SmallRow $dim><EffectIcon /><span>Эффекты для фигур</span><Arrow $dim /></SmallRow>
            </SmallCol>
          </GroupBody>
          <GroupLabel>Рисование<Launcher /></GroupLabel>
        </Group>
        <Group $w={96}>
          <GroupBody>
            <SmallCol $ml={6}>
              <SmallRow $gap={4}><FindIcon />Найти</SmallRow>
              <SmallRow $gap={2}><ReplaceIcon />Заменить<Arrow /></SmallRow>
              <SmallRow $gap={4}><SelectIcon />Выделить<Arrow /></SmallRow>
            </SmallCol>
          </GroupBody>
          <GroupLabel>Редактирование</GroupLabel>
        </Group>
      </Ribbon>

      <Workspace>
        <Swoosh width="700" height="140" viewBox="0 0 700 140">
          <path d="M0 132 C150 82 310 22 520 0 L0 0Z" fill="#7b7b7b" />
          <path d="M0 132 C150 82 310 22 520 0" fill="none" stroke="#666" strokeWidth="2" />
        </Swoosh>
        <SidePanel>
          <PanelTabs>
            <PanelTab $active>Слайды</PanelTab>
            <PanelTab>Структура</PanelTab>
            <PanelClose>x</PanelClose>
          </PanelTabs>
          <ThumbList>
            <ThumbRow><ThumbNum>1</ThumbNum><ThumbBox><Thumb1 /></ThumbBox></ThumbRow>
            <ThumbRow $sel><ThumbNum>2</ThumbNum><ThumbBox><Thumb2 /></ThumbBox></ThumbRow>
            <ThumbRow><ThumbNum>3</ThumbNum><ThumbBox><Thumb3 /></ThumbBox></ThumbRow>
          </ThumbList>
        </SidePanel>
        <Splitter />
        <RightCol>
          <EditRow>
            <SlideArea>
              <Slide>
                <Connectors width="650" height="488" viewBox="0 0 650 488">
                  <path d="M342 183v82M144 253.500h396M144 253v12M540 253v12" fill="none" stroke="#000" strokeWidth="2.6" />
                </Connectors>
                <Node $x={257} $y={19} $c="#00ccff">{"Добровольные \nблаготворительные\nакции в группе 2 А"}</Node>
                <Node $x={59} $y={265} $c="#cc99ff">{"Акция\n«Помоги\nДеду Морозу»"}</Node>
                <Node $x={257} $y={265} $c="#cc99ff">{"Акция\n«Копилка\nдобрых дел»"}</Node>
                <Node $x={455} $y={265} $c="#cc99ff">{"Акция\n«Тайный друг»"}</Node>
              </Slide>
            </SlideArea>
            <ScrollBar>
              <ScrollTrack>
                <Tri $up $c="#aaa" />
                <ScrollThumb><i /><i /><i /><i /></ScrollThumb>
                <ScrollEnd><Tri $c="#aaa" /></ScrollEnd>
              </ScrollTrack>
              <PageBtns>
                <DoubleArrow><Tri $up $c="#111" /><Tri $up $c="#111" /></DoubleArrow>
                <DoubleArrow><Tri $c="#111" /><Tri $c="#111" /></DoubleArrow>
              </PageBtns>
            </ScrollBar>
          </EditRow>
          <HGrip />
          <NotesRow>
            <Notes>Заметки к слайду</Notes>
            <NotesEnd />
          </NotesRow>
        </RightCol>
      </Workspace>

      <StatusBar>
        <StatusCell $w={82} $pl={8}>Слайд 2 из 3</StatusCell>
        <StatusCell $w={180} $pl={9}>"Оформление по умолчанию"</StatusCell>
        <StatusCell $w={136} $pl={8}><SpellIcon /><LangText>Русский (Россия)</LangText></StatusCell>
        <StatusRight>
          <ViewBtns>
            <ViewBtn $on><S w={12} h={10}><path d="M.5.500h11v9H.5zM5 .500v9M6 3h5M6 6h5" fill="none" stroke="#444" /></S></ViewBtn>
            <ViewBtn><S w={12} h={10}><path d="M.5.500h4v3h-4zM7.500.500h4v3h-4zM.5 6.500h4v3h-4zM7.500 6.500h4v3h-4z" fill="#bbb" stroke="#333" /></S></ViewBtn>
            <ViewBtn><S w={12} h={11}><path d="M.5.500h11v6H.5zM6 7v3M3 10.500h6" fill="none" stroke="#333" /></S></ViewBtn>
          </ViewBtns>
          <Zoom>68%</Zoom>
          <Round>–</Round>
          <SliderLine><SliderKnob /></SliderLine>
          <Round>+</Round>
          <FitBtn><S w={11}><path d="M5.500 0v3M4 1.500h3M5.500 8v3M4 9.500h3M0 5.500h3M8 5.500h3" stroke="#444" /></S></FitBtn>
        </StatusRight>
      </StatusBar>

      <Taskbar>
        <TaskSlot $w={40} $ml={7}><StartIcon /></TaskSlot>
        <TaskSlot $w={36} $ml={25}><SpeakerIcon /></TaskSlot>
        <TaskSlot $w={59} $ml={13} $on><FirefoxIcon /></TaskSlot>
        <TaskSlot $w={36} $ml={15}><ClapIcon /></TaskSlot>
        <TaskSlot $w={36} $ml={26}><YandexIcon /></TaskSlot>
        <TaskSlot $w={36} $ml={27}><VlcIcon /></TaskSlot>
        <TaskSlot $w={59} $ml={13} $on><TorrentIcon /></TaskSlot>
        <TaskSlot $w={58} $ml={4} $on><FolderIcon /></TaskSlot>
        <TaskSlot $w={54} $ml={4} $on><WordIcon /></TaskSlot>
        <TaskSlot $w={58} $ml={8} $on><PptIcon /></TaskSlot>
        <Tray>
          <Lang>RU</Lang>
          <Tri $up $c="#f4f4f4" />
          <TrayGap $w={13} />
          <FlagIcon />
          <TrayGap $w={8} />
          <NetIcon />
          <Clock><span>19:14</span><span>19.10.2015</span></Clock>
          <ShowDesk />
        </Tray>
      </Taskbar>
    </Window>
  );
}
